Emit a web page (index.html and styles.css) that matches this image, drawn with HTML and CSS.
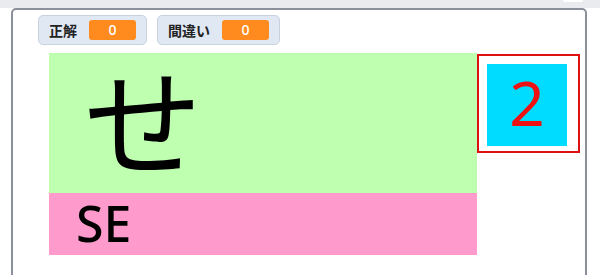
FILE: index.html
```html
<!DOCTYPE html>
<html lang="ja">
<head>
<meta charset="utf-8">
<title>Kana quiz</title>
<link rel="stylesheet" href="styles.css">
</head>
<body>
<div class="topbar"><span class="tab"></span></div>
<div class="card">
  <div class="scores">
    <div class="badge"><span class="label">正解</span><span class="count">0</span></div>
    <div class="badge"><span class="label">間違い</span><span class="count">0</span></div>
  </div>
  <div class="quiz">
    <div class="cards">
      <div class="kana">せ</div>
      <div class="romaji">SE</div>
    </div>
    <div class="counter"><div class="num">2</div></div>
  </div>
</div>
</body>
</html>
```
FILE: styles.css
```css
html, body {
  margin: 0;
  padding: 0;
  background: #ffffff;
  font-family: "Noto Sans", "Noto Sans CJK JP", sans-serif;
  overflow: hidden;
}
.topbar {
  height: 8px;
  background: #e9ebee;
  display: flex;
  justify-content: flex-end;
  padding-right: 17px;
}
.tab {
  width: 20px;
  height: 2px;
  background: #ffffff;
  border-radius: 0 0 2px 2px;
}
.card {
  margin-left: 11px;
  width: 572px;
  height: 300px;
  border: 2px solid #8b909a;
  border-radius: 5px;
  background: #ffffff;
}
.scores {
  display: flex;
  gap: 10px;
  padding: 5px 0 0 25px;
}
.badge {
  display: flex;
  align-items: center;
  gap: 12px;
  height: 28px;
  padding: 0 10px;
  background: #e0e8f4;
  border: 1px solid #c9d1de;
  border-radius: 5px;
}
.label {
  font-family: "Noto Sans CJK JP", sans-serif;
  font-weight: 700;
  font-size: 14px;
  line-height: 20px;
  color: #222222;
}
.count {
  width: 47px;
  height: 20px;
  line-height: 20px;
  text-align: center;
  background: #ff8b1e;
  color: #ffffff;
  font-size: 14px;
  font-weight: 500;
  border-radius: 3px;
}
.quiz {
  display: flex;
  align-items: flex-start;
  padding: 8px 0 0 36px;
}
.cards {
  width: 428px;
}
.kana {
  height: 140px;
  background: #bfffb0;
  font-family: "Noto Sans CJK JP", sans-serif;
  font-size: 118px;
  line-height: 128px;
  padding-left: 35px;
  color: #000000;
}
.romaji {
  height: 62px;
  background: #ff9acd;
  font-size: 50px;
  font-weight: 500;
  line-height: 60px;
  padding-left: 27px;
  color: #000000;
}
.counter {
  margin-top: 1px;
  width: 80px;
  height: 82px;
  padding: 8px 11px 5px 8px;
  border: 2px solid #e01010;
}
.num {
  width: 80px;
  height: 82px;
  background: #00dcff;
  color: #ee1111;
  font-size: 62px;
  line-height: 76px;
  text-align: center;
}
```
